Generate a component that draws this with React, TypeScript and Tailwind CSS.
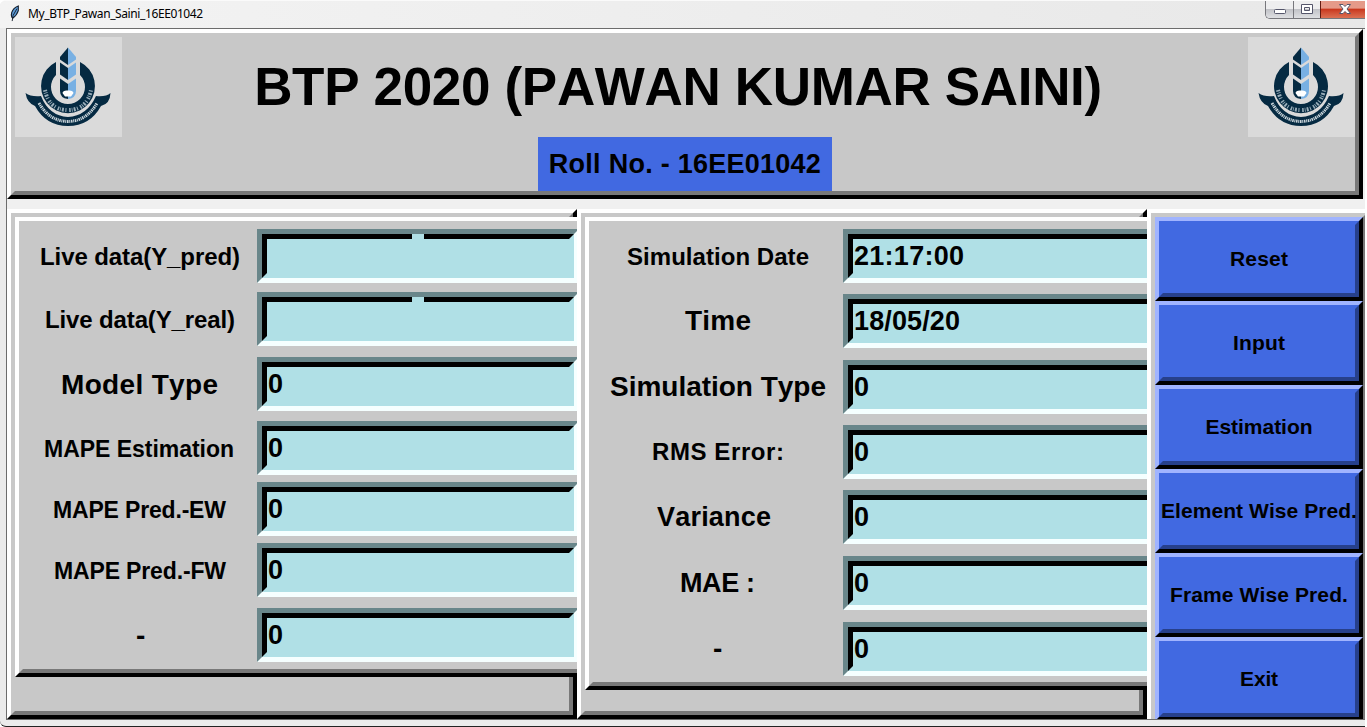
import React from "react";

type Row = { label: string; x: number; w: number; size: string; value: string; gap: string; notch?: boolean };

const F = "font-['Liberation_Sans',Arial,sans-serif] font-bold text-black whitespace-nowrap [font-kerning:none]";

const LEFT: Row[] = [
  { label: "Live data(Y_pred)", x: 40, w: 200, size: "text-[24px]", value: "", gap: "mt-[8px]", notch: true },
  { label: "Live data(Y_real)", x: 45, w: 190, size: "text-[24px]", value: "", gap: "mt-[9px]", notch: true },
  { label: "Model Type", x: 61, w: 157, size: "text-[28px]", value: "0", gap: "mt-[11px]" },
  { label: "MAPE Estimation", x: 44, w: 190, size: "text-[23px]", value: "0", gap: "mt-[10px]" },
  { label: "MAPE Pred.-EW", x: 53, w: 173, size: "text-[23px]", value: "0", gap: "mt-[7px]" },
  { label: "MAPE Pred.-FW", x: 54, w: 172, size: "text-[23px]", value: "0", gap: "mt-[7px]" },
  { label: "-", x: 136, w: 9, size: "text-[28px]", value: "0", gap: "mt-[11px]" },
];

const RIGHT: Row[] = [
  { label: "Simulation Date", x: 627, w: 182, size: "text-[24px]", value: "21:17:00", gap: "mt-[8px]" },
  { label: "Time", x: 685, w: 66, size: "text-[28px]", value: "18/05/20", gap: "mt-[11px]" },
  { label: "Simulation Type", x: 610, w: 216, size: "text-[28px]", value: "0", gap: "mt-[12px]" },
  { label: "RMS Error:", x: 652, w: 132, size: "text-[24px]", value: "0", gap: "mt-[11px]" },
  { label: "Variance", x: 657, w: 114, size: "text-[27px]", value: "0", gap: "mt-[11px]" },
  { label: "MAE :", x: 680, w: 75, size: "text-[27px]", value: "0", gap: "mt-[12px]" },
  { label: "-", x: 713, w: 9, size: "text-[28px]", value: "0", gap: "mt-[12px]" },
];

/** Text whose letter spacing is adjusted so that it spans the given width. */
function Fit({ text, w, size, className = "" }: { text: string; w: number; size: string; className?: string }) {
  const ref = React.useRef<HTMLSpanElement>(null);
  const [sp, setSp] = React.useState(0);
  React.useLayoutEffect(() => {
    if (ref.current && text.length > 1) {
      setSp((w - ref.current.getBoundingClientRect().width) / (text.length - 1));
    }
  }, [text, w]);
  return (
    <span ref={ref} className={`${F} ${size} ${className}`} style={{ letterSpacing: sp }}>
      {text}
    </span>
  );
}

function Logo() {
  return (
    <svg viewBox="0 0 107 100" className="h-[100px] w-[107px] shrink-0 bg-[#dadada]">
      <g fill="#052a42">
        <path d="M41 25V38A17 17 0 1 0 65 38V25A27 27 0 1 1 41 25Z" />
        <path d="M10.500 56Q16 60 26 59Q34 79 53 80Q72 79 81 59Q91 60 95.500 56Q95 67 86 69Q75 89 53 89Q31 89 20 69Q12 66 10.500 56Z" />
        <path d="M53 10.500L45 20V22.500L53 28Z" />
        <path d="M45 25.500L53 31V43L45 37.500Z" />
        <path d="M45 41.500L53 47V62Q45 61 45 54Z" />
      </g>
      <g fill="#78b0e3">
        <path d="M53 10.500L61 20V22.500L53 28Z" />
        <path d="M61 25.500L53 31V43L61 37.500Z" />
        <path d="M61 41.500L53 47V62Q61 61 61 54Z" />
      </g>
      <path d="M47.500 56Q48 53 53 53.500Q58 53 58.500 56L56 59.500H50Z" fill="#fff" />
      <path d="M30 53Q34 73 53 73Q72 73 76 53" fill="none" stroke="#c9d8e0" strokeWidth="4" strokeDasharray="1.500 1 .8 1.200 2 1.500 1 2.500" opacity=".75" />
      <path d="M24 66Q34 84 53 84.500Q72 84 82 66" fill="none" stroke="#eef4f7" strokeWidth="3" strokeDasharray="1.500 .7 1 .7" opacity=".85" />
    </svg>
  );
}

function Entry({ value, notch, wide }: { value: string; notch?: boolean; wide?: boolean }) {
  return (
    <div className={`${wide ? "w-[340px]" : "w-[322px]"} h-[54px] shrink-0 border-[5px] border-t-[#69868a] border-l-[#69868a] border-r-[#f5ffff] border-b-[#f5ffff] bg-[#b0e0e6]`}>
      <div className="relative h-full border-[5px] border-t-black border-l-black border-r-[#b0e0e6] border-b-[#b0e0e6]">
        {notch && <div className="absolute -top-[5px] left-[145px] h-[5px] w-[12px] bg-[#b0e0e6]" />}
        <div className="flex h-[34px] items-start pt-px pl-px">
          <span className={`${F} text-[27px] leading-[33px]`}>
            {value.length > 1 ? <Fit text={value} w={value.includes(":") ? 110 : 106} size="text-[27px]" /> : value}
          </span>
        </div>
      </div>
    </div>
  );
}

function Column({ rows, origin, entryX, height, wide }: { rows: Row[]; origin: number; entryX: number; height: string; wide?: boolean }) {
  return (
    <div className="h-[510px] w-[570px] shrink-0 overflow-hidden">
      <div className="h-full border-4 border-t-white border-l-white border-r-black border-b-black">
        <div className="h-full border-4 border-t-[#c8c8c8] border-l-[#c8c8c8] border-r-[#787878] border-b-[#787878] bg-[#c8c8c8]">
          <div className={`${height} relative w-[620px] border-4 border-t-white border-l-white border-r-black border-b-black`}>
            <div className="h-full border-4 border-t-[#c8c8c8] border-l-[#c8c8c8] border-r-[#787878] border-b-[#787878] bg-[#c8c8c8]">
              <div className="-mt-1 flex flex-col">
                {rows.map((r, i) => (
                  <div key={i} className={`${r.gap} flex h-[54px] items-center`}>
                    <div className="shrink-0" style={{ width: entryX - origin - 8 }}>
                      <div className={wide && i > 0 ? "flex" : "flex pt-[2px]"} style={{ paddingLeft: r.x - origin - 8 }}>
                        <Fit text={r.label} w={r.w} size={r.size} />
                      </div>
                    </div>
                    <Entry value={r.value} notch={r.notch} wide={wide} />
                  </div>
                ))}
              </div>
            </div>
          </div>
        </div>
      </div>
    </div>
  );
}

const BUTTONS: [string, number][] = [
  ["Reset", 58], ["Input", 52], ["Estimation", 107], ["Element Wise Pred.", 196], ["Frame Wise Pred.", 178], ["Exit", 38],
];

export default function App() {
  return (
    <div className="h-[727px] w-[1367px] overflow-hidden bg-white">
      <div className="flex h-[727px] w-[1365px] flex-col overflow-hidden rounded-l-md border-t border-b border-t-[#fafafa] border-b-[#222] bg-[#ebebeb]">
        <header className="flex h-[27px] shrink-0 items-start justify-between bg-gradient-to-r from-[#f3f3f3] to-[#e8e8e8] pl-[9px]">
          <div className="flex h-[25px] items-center">
            <svg viewBox="0 0 12 18" className="h-[17px] w-[12px]">
              <path d="M9.500 1Q4 3 2.500 8Q1.500 12 3.500 14Q8 11 9.500 6Z" fill="#5c9bd8" stroke="#17212e" strokeWidth="1.200" />
              <path d="M8 4L4 11L3 17" fill="none" stroke="#17212e" />
            </svg>
            <span className="ml-[7px] pt-px font-['Noto_Sans',sans-serif] text-[12px] tracking-[-0.4px] whitespace-nowrap text-black">My_BTP_Pawan_Saini_16EE01042</span>
          </div>
          <div className="flex h-[18px] w-[100px] overflow-hidden rounded-bl-[5px] border-b border-l border-[#77777c]">
            <div className="flex w-[28px] items-center justify-center border-r border-[#77777c] bg-gradient-to-b from-[#eeeeef] from-45% via-[#c2c3c8] via-50% to-[#dedfe2]">
              <svg viewBox="0 0 12 5" className="mt-[4px] h-[5px] w-[12px]"><rect x=".5" y=".5" width="11" height="4" rx="1" fill="#fff" stroke="#55566b" /></svg>
            </div>
            <div className="flex w-[26px] items-center justify-center bg-gradient-to-b from-[#eeeeef] from-45% via-[#c2c3c8] via-50% to-[#dedfe2]">
              <svg viewBox="0 0 12 10" className="mb-px h-[10px] w-[12px]"><path d="M.5.5h11v9H.500zM3.500 3.500v3h5v-3z" fill="#fff" fillRule="evenodd" stroke="#55566b" /></svg>
            </div>
            <div className="flex flex-1 items-center justify-center border-l border-[#641c12] bg-gradient-to-b from-[#e59a89] from-40% via-[#c9391f] via-50% to-[#dc7053]">
              <svg viewBox="0 0 12 10" className="mb-px ml-[3px] h-[10px] w-[12px]"><path d="M.5.5h3.500l2 2 2-2h3.500L8 5l3.500 4.500H8l-2-2-2 2H.500L4 5z" fill="#fff" stroke="#55566b" /></svg>
            </div>
          </div>
        </header>
        <div className="ml-[6px] h-[692px] shrink-0 overflow-hidden border-t border-b border-l border-[#6c6c6c] bg-[#f0f0f0]">
          <section className="h-[170px] w-[1356px] border-4 border-t-white border-l-white border-r-black border-b-black">
            <div className="flex h-full items-start justify-between border-4 border-t-[#c8c8c8] border-l-[#c8c8c8] border-r-[#787878] border-b-[#787878] bg-[#c8c8c8]">
              <Logo />
              <div className="flex flex-col items-center">
                <h1 className="flex h-[100px] items-center pr-[14px]">
                  <Fit text="BTP 2020 (PAWAN KUMAR SAINI)" w={848} size="text-[53px]" />
                </h1>
                <div className="flex h-[54px] w-[294px] items-center justify-center bg-[#4169e1]">
                  <Fit text="Roll No. - 16EE01042" w={272} size="text-[27px]" />
                </div>
              </div>
              <Logo />
            </div>
          </section>
          <main className="mt-[10px] flex h-[510px]">
            <Column rows={LEFT} origin={15} entryX={257} height="h-[460px]" />
            <Column rows={RIGHT} origin={585} entryX={843} height="h-[473px]" wide />
            <div className="h-[520px] w-[224px] shrink-0 border-4 border-t-white border-l-white border-r-black border-b-black">
              <div className="h-full border-4 border-t-[#c8c8c8] border-l-[#c8c8c8] border-r-[#787878] border-b-[#787878] bg-[#787878]">
                {BUTTONS.map(([label, w]) => (
                  <button key={label} className="block h-[84px] w-[208px] border-4 border-t-[#a0b4ff] border-l-[#a0b4ff] border-r-black border-b-black">
                    <div className="flex h-full items-center justify-center border-4 border-t-[#4169e1] border-l-[#4169e1] border-r-[#27408b] border-b-[#27408b] bg-[#4169e1]">
                      <Fit text={label} w={w} size="text-[21px]" />
                    </div>
                  </button>
                ))}
              </div>
            </div>
          </main>
        </div>
      </div>
    </div>
  );
}
